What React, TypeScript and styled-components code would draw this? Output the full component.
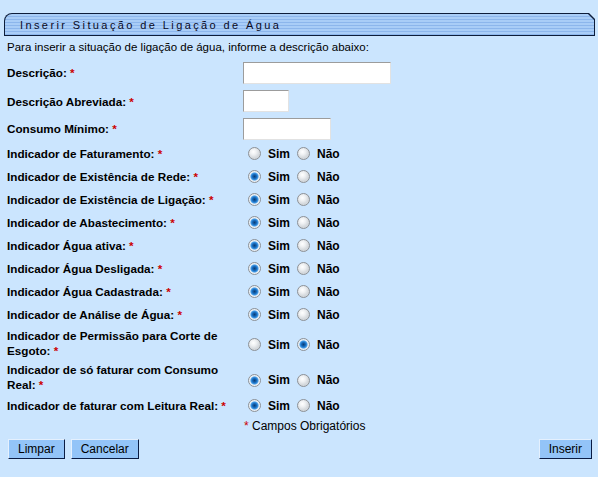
import React from "react";
import styled, { createGlobalStyle } from "styled-components";

const Global = createGlobalStyle`
  html, body { margin: 0; padding: 0; background: #cbe5fe; }
  body { font-family: "Liberation Sans", Arial, sans-serif; color: #000; }
`;

const Page = styled.div`
  width: 598px;
  min-height: 477px;
  box-sizing: border-box;
  padding: 13px 3px 0 4px;
  background: #cbe5fe;
`;

const TabOuter = styled.div`
  height: 23px;
  background: #0d1d3a;
  border-top-left-radius: 8px;
  clip-path: polygon(0 0, calc(100% - 6px) 0, 100% 6px, 100% 100%, 0 100%);
  padding: 1px;
  box-sizing: border-box;
`;

const TabInner = styled.div`
  height: 100%;
  border-top-left-radius: 7px;
  clip-path: polygon(0 0, calc(100% - 6px) 0, 100% 6px, 100% 100%, 0 100%);
  background: repeating-linear-gradient(
    to bottom,
    #a9cdf7 0px,
    #a9cdf7 2px,
    #8cb6ec 2px,
    #8cb6ec 3px
  );
  display: flex;
  align-items: center;
  padding-left: 15px;
  font-size: 11px;
  letter-spacing: 2.4px;
  color: #0a0a1e;
`;

const Intro = styled.div`
  font-size: 11.5px;
  line-height: 14px;
  padding: 4px 0 0 3px;
  height: 18px;
  box-sizing: border-box;
`;

const Form = styled.div`
  display: flex;
  flex-direction: column;
  padding: 4px 0 0 3px;
`;

const Row = styled.div<{ $h: number }>`
  display: flex;
  align-items: center;
  height: ${(p) => p.$h}px;
`;

const Label = styled.div`
  width: 236px;
  font-size: 11.7px;
  font-weight: bold;
  line-height: 15px;
  padding-right: 10px;
  box-sizing: border-box;
`;

const Req = styled.span`
  color: #cc0000;
`;

const TextInput = styled.input<{ $w: number }>`
  width: ${(p) => p.$w}px;
  height: 22px;
  box-sizing: border-box;
  border: 1px solid;
  border-color: #9c9c9c #e2e2e2 #e2e2e2 #9c9c9c;
  background: #fff;
  outline: none;
  font-family: "Liberation Sans", Arial, sans-serif;
  font-size: 12px;
  padding: 2px 3px;
  margin: 0;
`;

const Choices = styled.div<{ $down?: number }>`
  display: flex;
  align-items: center;
  padding-left: 5px;
  margin-top: ${(p) => p.$down || 0}px;
  font-size: 12px;
  font-weight: bold;
`;

const Radio = styled.span<{ $on?: boolean }>`
  width: 13px;
  height: 13px;
  border-radius: 50%;
  box-sizing: border-box;
  border: 1px solid #8d9196;
  background: ${(p) =>
    p.$on
      ? "radial-gradient(circle at 50% 50%, #0b3d74 0, #1667b8 2px, #3f9ae8 3.5px, #e4ecf4 4.5px, #f6f8fa 6px)"
      : "radial-gradient(circle at 40% 35%, #ffffff 0, #eef0f2 3px, #d4d8dc 6px)"};
  display: inline-block;
  flex-shrink: 0;
`;

const ChoiceText = styled.span<{ $gap: number }>`
  margin-left: 7px;
  margin-right: ${(p) => p.$gap}px;
`;

const Note = styled.div`
  height: 18px;
  display: flex;
  align-items: center;
  padding-left: 237px;
  font-size: 12px;
`;

const Buttons = styled.div`
  display: flex;
  align-items: center;
  padding: 4px 3px 0 4px;
  gap: 6px;
`;

const Spacer = styled.div`
  flex: 1;
`;

const Button = styled.button`
  height: 20px;
  padding: 0 9px;
  background: #93c4f8;
  border: 1px solid;
  border-color: #e4f0fe #0a1c44 #0a1c44 #e4f0fe;
  font-family: "Liberation Sans", Arial, sans-serif;
  font-size: 12px;
  color: #000;
  cursor: pointer;
  margin: 0;
`;

type Pick = "sim" | "nao" | "none";
type RowDef = { label: React.ReactNode; pick: Pick; h?: number; down?: number };

const radioRows: RowDef[] = [
  { label: "Indicador de Faturamento:", pick: "none" },
  { label: "Indicador de Existência de Rede:", pick: "sim" },
  { label: "Indicador de Existência de Ligação:", pick: "sim" },
  { label: "Indicador de Abastecimento:", pick: "sim" },
  { label: "Indicador Água ativa:", pick: "sim" },
  { label: "Indicador Água Desligada:", pick: "sim" },
  { label: "Indicador Água Cadastrada:", pick: "sim" },
  { label: "Indicador de Análise de Água:", pick: "sim" },
  { label: "Indicador de Permissão para Corte de Esgoto:", pick: "nao", h: 34, down: 3 },
  { label: "Indicador de só faturar com Consumo Real:", pick: "sim", h: 34, down: 6 },
  { label: "Indicador de faturar com Leitura Real:", pick: "sim" },
];

export default function App() {
  return (
    <Page>
      <Global />
      <TabOuter>
        <TabInner>Inserir Situação de Ligação de Água</TabInner>
      </TabOuter>
      <Intro>Para inserir a situação de ligação de água, informe a descrição abaixo:</Intro>
      <Form>
        <Row $h={29}>
          <Label>
            Descrição: <Req>*</Req>
          </Label>
          <TextInput $w={148} />
        </Row>
        <Row $h={28}>
          <Label>
            Descrição Abreviada: <Req>*</Req>
          </Label>
          <TextInput $w={46} />
        </Row>
        <Row $h={27}>
          <Label>
            Consumo Mínimo: <Req>*</Req>
          </Label>
          <TextInput $w={88} />
        </Row>
        {radioRows.map((r, i) => (
          <Row key={i} $h={r.h || 23}>
            <Label>
              {r.label} <Req>*</Req>
            </Label>
            <Choices $down={r.down}>
              <Radio $on={r.pick === "sim"} />
              <ChoiceText $gap={7}>Sim</ChoiceText>
              <Radio $on={r.pick === "nao"} />
              <ChoiceText $gap={0}>Não</ChoiceText>
            </Choices>
          </Row>
        ))}
        <Note>
          <Req>*</Req>&nbsp;Campos Obrigatórios
        </Note>
      </Form>
      <Buttons>
        <Button>Limpar</Button>
        <Button>Cancelar</Button>
        <Spacer />
        <Button>Inserir</Button>
      </Buttons>
    </Page>
  );
}
